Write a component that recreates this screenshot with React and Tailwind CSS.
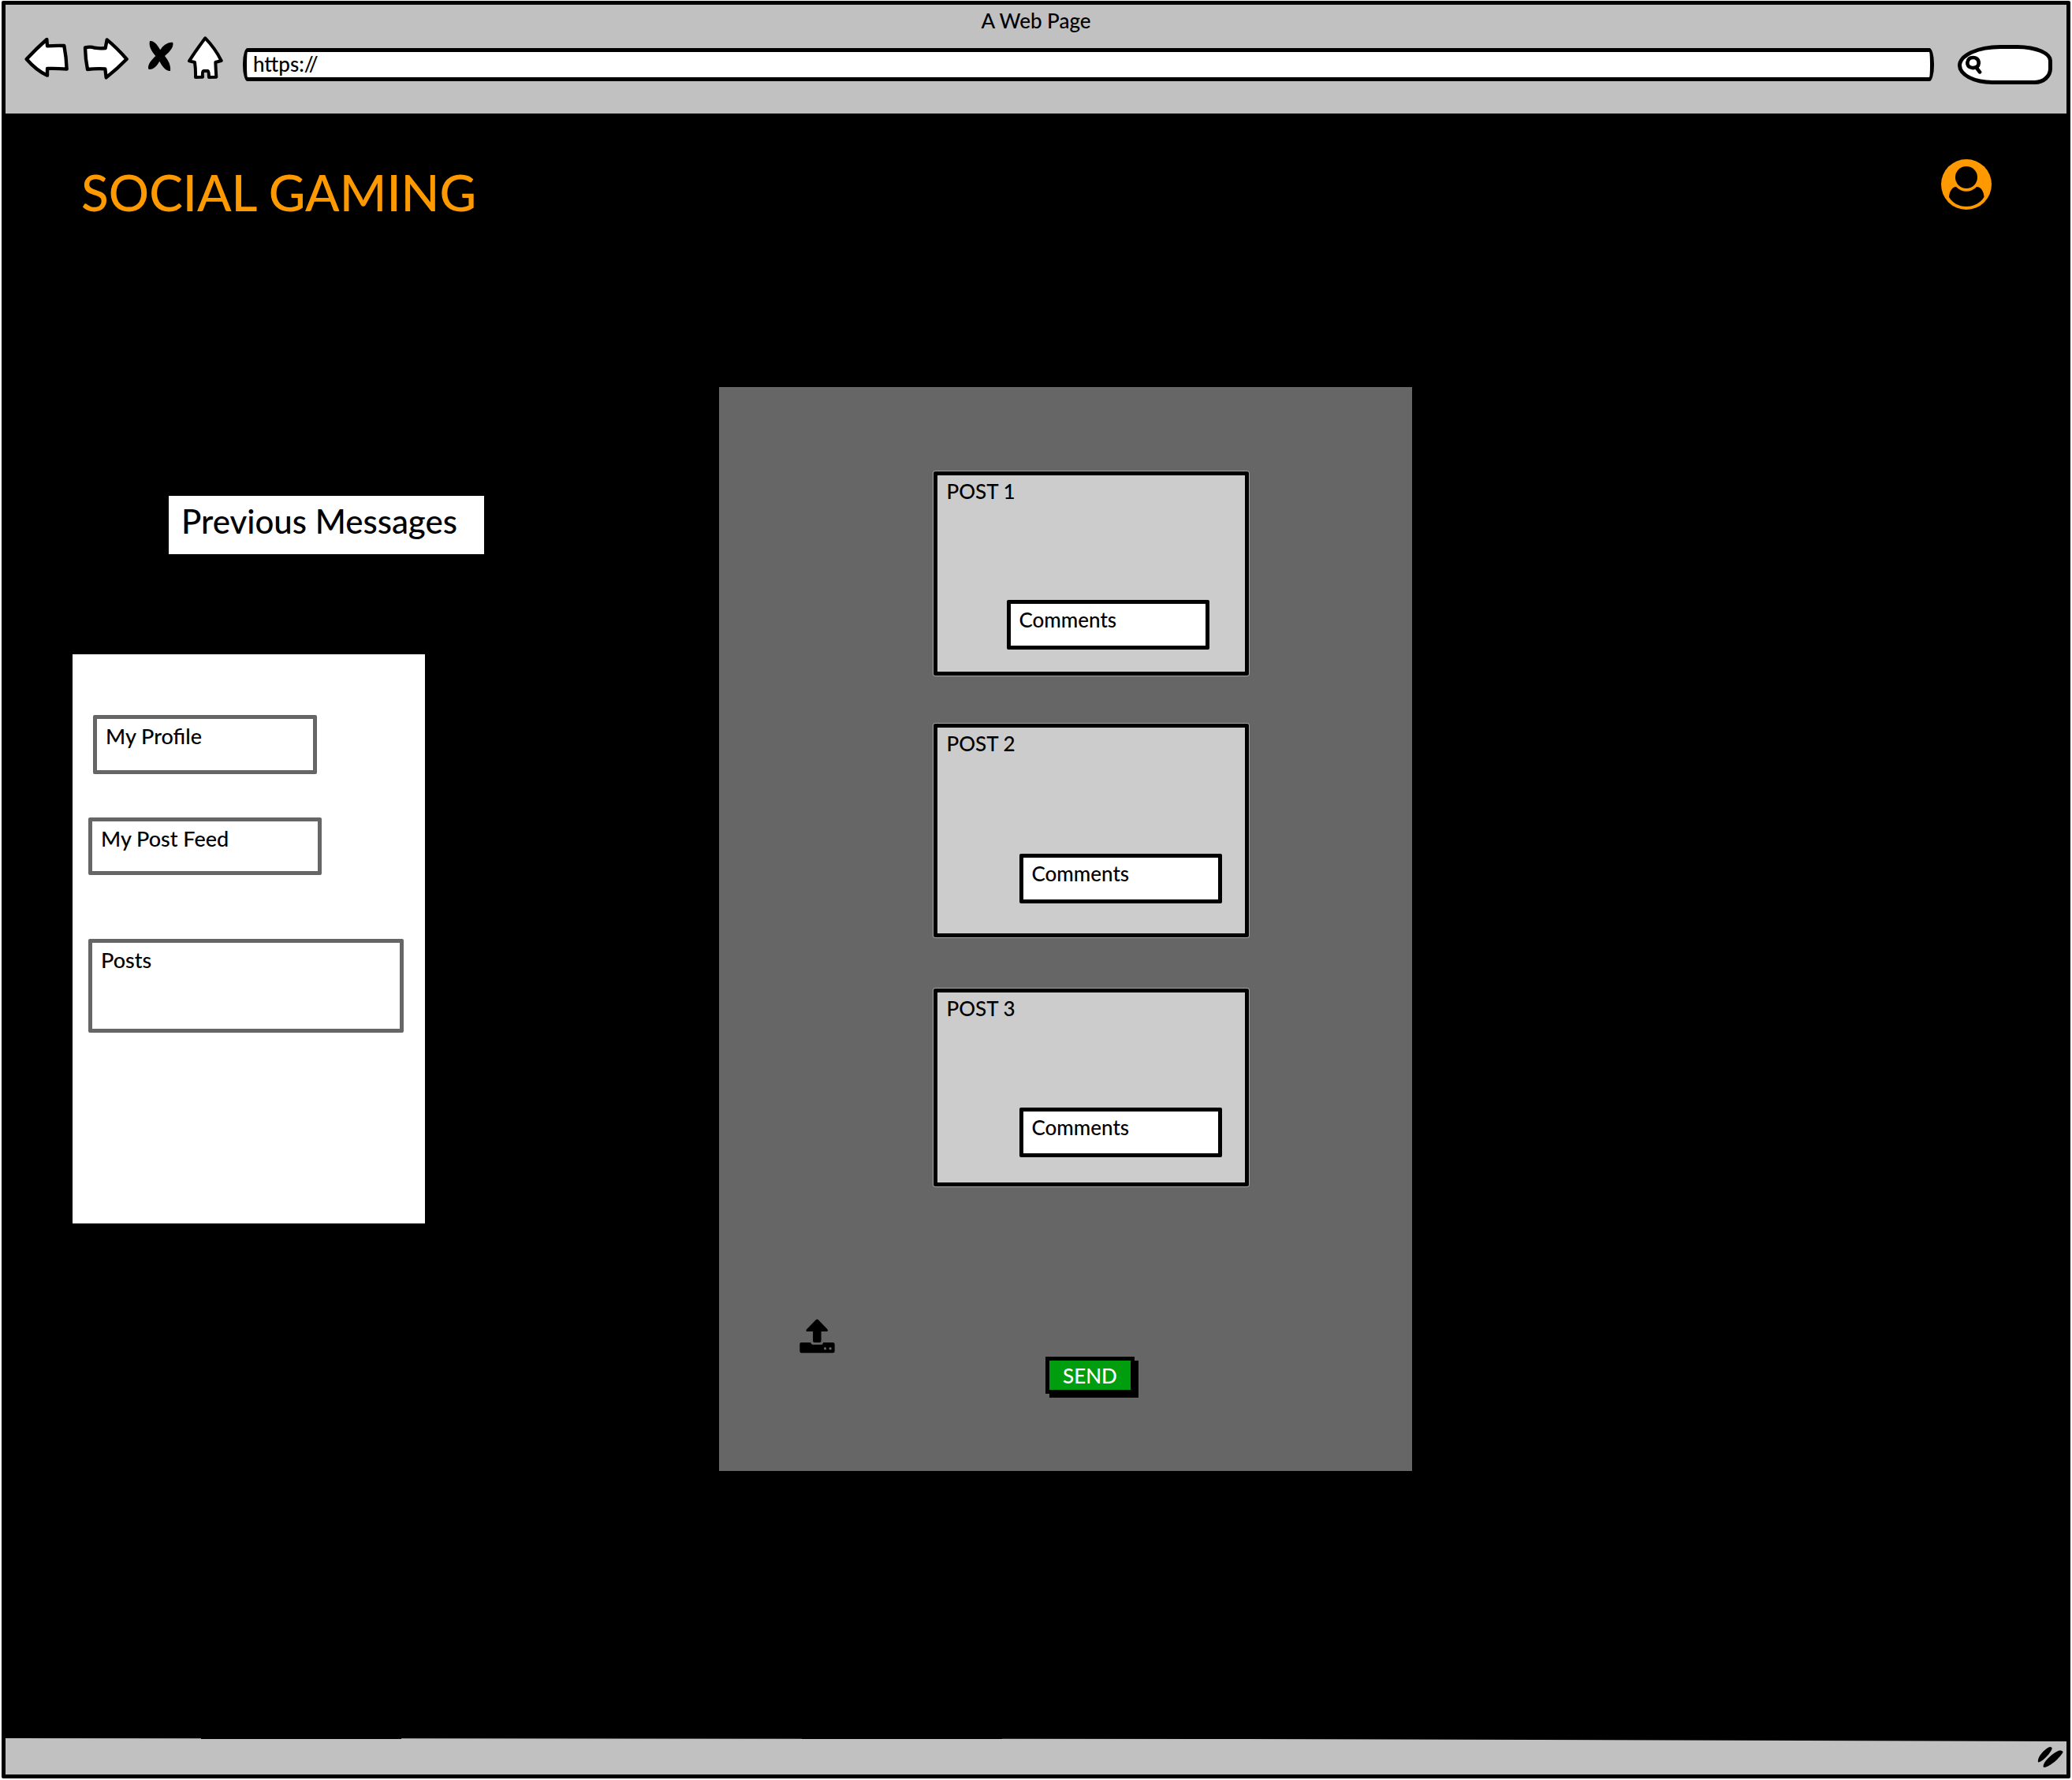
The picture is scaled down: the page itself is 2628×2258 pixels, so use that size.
import React from "react";

const posts = [
  { title: "POST 1", card: "min-h-[259px] pr-[45px] pb-7" },
  { title: "POST 2", card: "mt-[61px] min-h-[271px] pr-[29px] pb-[38px]" },
  { title: "POST 3", card: "mt-[65px] min-h-[251px] pr-[29px] pb-8" },
];

const links = [
  { label: "My Profile", box: "ml-[26px] w-[284px] min-h-[75px]" },
  { label: "My Post Feed", box: "mt-[55px] ml-5 w-[296px] min-h-[73px]" },
  { label: "Posts", box: "mt-[81px] ml-5 w-[400px] min-h-[119px]" },
];

function BackIcon() {
  return (
    <svg viewBox="93 138 171 168" className="h-14 w-[57px]" aria-hidden="true">
      <path
        d="M101 225Q138 185 178 150L180 175Q212 173 244 174Q252 215 254 263Q218 260 180 261L180 287Q138 268 101 225Z"
        fill="#fff" stroke="#000" strokeWidth="13" strokeLinejoin="round"
      />
    </svg>
  );
}

function ForwardIcon() {
  return (
    <svg viewBox="315 138 174 168" className="h-14 w-[58px]" aria-hidden="true">
      <path
        d="M324 181Q345 176 360 182Q382 186 401 183L407 151Q445 182 482 225Q446 262 404 295L400 262Q365 260 333 264Q325 225 324 181Z"
        fill="#fff" stroke="#000" strokeWidth="13" strokeLinejoin="round"
      />
    </svg>
  );
}

function StopIcon() {
  return (
    <svg viewBox="540 138 123 168" className="h-14 w-[41px]" aria-hidden="true">
      <path d="M570 156C588 153 602 176 610 190C620 172 642 158 658 162C662 182 642 200 627 213C640 230 651 248 648 270C632 272 615 250 607 233C597 252 580 268 565 263C560 246 578 226 592 213C577 196 565 176 570 156Z" />
    </svg>
  );
}

function HomeIcon() {
  return (
    <svg viewBox="713 138 138 168" className="h-14 w-[46px]" aria-hidden="true">
      <path
        d="M780 145Q818 184 841 231L819 237Q820 265 822 293L794 294Q794 272 790 270L773 270Q768 272 770 293L743 294Q744 265 740 237L719 232Q744 192 780 145Z"
        fill="#fff" stroke="#000" strokeWidth="12" strokeLinejoin="round"
      />
    </svg>
  );
}

function SearchIcon() {
  return (
    <svg viewBox="272 218 66 72" className="h-6 w-[22px] shrink-0" fill="none" stroke="#000" strokeWidth="14" strokeLinecap="round" aria-hidden="true">
      <path d="M303 227C318 227 326 236 325 249C324 262 315 267 300 266C287 265 281 256 282 246C284 234 292 227 303 227Z" />
      <path d="M315 264L329 282" />
    </svg>
  );
}

function UserIcon() {
  return (
    <svg viewBox="0 0 64 64" className="size-16" aria-hidden="true">
      <circle cx="32" cy="32" r="32" fill="#ff9900" />
      <circle cx="32" cy="23" r="14" />
      <path d="M19 35A17.5 17.5 0 0 0 45 35C51 35 54 41 54.500 48C50 55 42 60 32 60C22 60 14 55 10 48C10.500 41 14 35 19 35Z" />
    </svg>
  );
}

function UploadIcon() {
  return (
    <svg viewBox="98 104 137 134" className="h-11 w-[45px]" aria-hidden="true">
      <path d="M162 107Q166 104 170 107L206 144Q210 153 202 153H182V189Q182 195 176 195H156Q150 195 150 189V153H129Q121 153 125 145Z" />
      <path
        fillRule="evenodd"
        d="M105 195H141Q144 204 152 204H180Q188 204 190 195H227Q234 195 234 202V229Q234 236 227 236H105Q99 236 99 229V202Q99 195 105 195ZM197 214a5 5 0 1 0 .1 0ZM217 214a5 5 0 1 0 .1 0Z"
      />
    </svg>
  );
}

function ResizeGrip() {
  return (
    <svg viewBox="253 208 98 80" className="h-[27px] w-[33px]" aria-hidden="true">
      <path d="M256 268C252 250 275 224 296 212Q306 209 309 216C303 234 278 262 258 269Z" />
      <path d="M276 287C271 270 308 236 334 225Q346 222 350 230C338 252 302 285 279 288Z" />
    </svg>
  );
}

export default function App() {
  return (
    <div className="flex min-h-screen flex-col bg-white pt-px pr-[2px] pb-[2px] pl-[2px] font-['Lato','Liberation_Sans',sans-serif] text-[26px] leading-8 font-medium text-black">
      <div className="flex flex-1 flex-col rounded-[2px] border-[5px] border-black bg-black">
        <div className="min-h-[138px] bg-[#c1c1c1] pt-1">
          <p className="text-center">A Web Page</p>
          <div className="flex items-start pt-1 pr-[18px] pl-6">
            <nav aria-label="Browser" className="flex gap-[17px]">
              <button type="button" aria-label="Back"><BackIcon /></button>
              <button type="button" aria-label="Forward"><ForwardIcon /></button>
              <button type="button" aria-label="Stop"><StopIcon /></button>
              <button type="button" aria-label="Home"><HomeIcon /></button>
            </nav>
            <div className="mt-[11px] ml-6 flex flex-1 items-center gap-[30px]">
              <input
                type="text"
                aria-label="Address"
                defaultValue="https://"
                className="h-[42px] min-w-0 flex-1 rounded-[6px/20px] border-[5px] border-black bg-white px-2 pb-[2px] outline-none"
              />
              <label className="flex h-[50px] w-[120px] items-center rounded-[54px_44px_22px_44px/26px_20px_20px_24px] border-[5px] border-black bg-white pl-1">
                <SearchIcon />
                <input type="search" aria-label="Search" className="w-full min-w-0 bg-transparent outline-none" />
              </label>
            </div>
          </div>
        </div>

        <header className="flex items-start justify-between pt-[58px] pr-[95px] pl-[96px]">
          <h1 className="pt-[10px] text-[64px] leading-[64px] text-[#ff9900]">SOCIAL GAMING</h1>
          <button type="button" aria-label="Account"><UserIcon /></button>
        </header>

        <main className="grid flex-1 grid-cols-[905fr_880fr_830fr] items-start pt-[215px] pb-20">
          <aside className="pt-[138px]">
            <h2 className="ml-[207px] w-[400px] bg-white px-4 pt-2 pb-[18px] text-[42px] leading-[48px]">
              Previous Messages
            </h2>
            <nav aria-label="Sections" className="mt-[127px] ml-[85px] min-h-[722px] w-[447px] bg-white pt-[77px]">
              {links.map((l) => (
                <a
                  key={l.label}
                  href="#"
                  className={`block rounded-[2px] border-[5px] border-[#666666] px-[11px] pt-[6px] text-[27px] ${l.box}`}
                >
                  {l.label}
                </a>
              ))}
            </nav>
          </aside>

          <section aria-label="Posts" className="bg-[#666666] pt-[107px] pb-[98px] pl-[66px]">
            {posts.map((p) => (
              <article
                key={p.title}
                className={`mx-auto flex w-[400px] flex-col justify-between rounded-[2px] border-[5px] border-black bg-[#cccccc] pt-1 pl-[11px] outline outline-[#cccccc]/60 ${p.card}`}
              >
                <h3>{p.title}</h3>
                <input
                  type="text"
                  aria-label={`Comments on ${p.title}`}
                  placeholder="Comments"
                  className="h-[63px] w-[257px] self-end rounded-[2px] border-[5px] border-black bg-white px-[10px] pb-[13px] outline-none placeholder:text-black"
                />
              </article>
            ))}
            <div className="mt-[168px] grid grid-cols-[1fr_auto_1fr] items-start pr-1">
              <button type="button" aria-label="Upload" className="ml-9 justify-self-start"><UploadIcon /></button>
              <button
                type="button"
                className="mt-12 h-[47px] w-[113px] border-[5px] border-black bg-[#009e0f] text-white shadow-[5px_5px_0_#000]"
              >
                SEND
              </button>
            </div>
          </section>
        </main>

        <footer className="flex min-h-[46px] items-center justify-end bg-[#c1c1c1] pr-1 [clip-path:polygon(0_0,60%_1px,100%_4px,100%_100%,0_100%)]">
          <ResizeGrip />
        </footer>
      </div>
    </div>
  );
}
